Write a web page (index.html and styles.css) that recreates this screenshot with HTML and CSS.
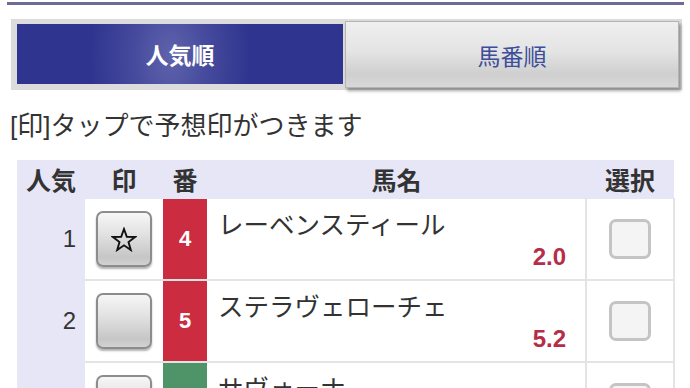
FILE: index.html
```html
<!DOCTYPE html>
<html lang="ja">
<head>
    <meta charset="UTF-8">
    <meta name="viewport" content="width=device-width, initial-scale=1.0">
    <title>人気順</title>
    <link rel="stylesheet" href="styles.css">
</head>
<body>
    <div class="top-line"></div>
    <div class="tabs">
        <div class="tab active">人気順</div>
        <div class="tab">馬番順</div>
    </div>
    <p class="hint">[印]タップで予想印がつきます</p>
    <table class="race-table">
        <thead>
            <tr>
                <th class="col-rank">人気</th>
                <th class="col-mark">印</th>
                <th class="col-num">番</th>
                <th class="col-name">馬名</th>
                <th class="col-check">選択</th>
            </tr>
        </thead>
        <tbody>
            <tr>
                <td class="rank">1</td>
                <td class="mark">
                    <button class="mark-btn">
                        <svg width="26" height="25" viewBox="0 0 26 25">
                            <polygon points="13,2 15.8,9.8 24,10 17.5,15 19.8,23 13,18.3 6.2,23 8.5,15 2,10 10.2,9.8" fill="none" stroke="#111" stroke-width="1.9" stroke-linejoin="miter"/>
                        </svg>
                    </button>
                </td>
                <td class="num red">4</td>
                <td class="name">
                    <div class="horse">レーベンスティール</div>
                    <div class="odds">2.0</div>
                </td>
                <td class="check"><span class="box"></span></td>
            </tr>
            <tr>
                <td class="rank">2</td>
                <td class="mark"><button class="mark-btn"></button></td>
                <td class="num red">5</td>
                <td class="name">
                    <div class="horse">ステラヴェローチェ</div>
                    <div class="odds">5.2</div>
                </td>
                <td class="check"><span class="box"></span></td>
            </tr>
            <tr>
                <td class="rank">3</td>
                <td class="mark"><button class="mark-btn"></button></td>
                <td class="num green">8</td>
                <td class="name">
                    <div class="horse">サヴォーナ</div>
                    <div class="odds">7.4</div>
                </td>
                <td class="check"><span class="box"></span></td>
            </tr>
        </tbody>
    </table>
</body>
</html>
```

FILE: styles.css
```css
body {
    margin: 0;
    background: #fff;
    color: #333;
    font-family: "Liberation Sans", "Noto Sans CJK JP", sans-serif;
    overflow: hidden;
}
.top-line {
    height: 3px;
    margin: 2px 6px 0 7px;
    background: #6f6b98;
}
.tabs {
    display: flex;
    margin: 14px 8px 0 11px;
    padding: 5px 3px 6px 6px;
    background: #dcdcdc;
    height: 60px;
}
.tab {
    display: flex;
    align-items: center;
    justify-content: center;
    font-size: 23px;
}
.tab.active {
    width: 326px;
    height: 60px;
    color: #fff;
    font-weight: bold;
    background: radial-gradient(ellipse 80px 130px at 47% 55%, #5f63ac 0%, #464b9e 45%, #2f358e 100%);
}
.tab:not(.active) {
    width: 332px;
    height: 65px;
    margin: -3px 0 0 2px;
    color: #3d4e9a;
    border: 1px solid #b4b4b4;
    background: linear-gradient(#efefef 0%, #e4e4e4 45%, #cfcfcf 80%, #d8d8d8 100%);
    box-shadow: 2px 3px 3px rgba(0, 0, 0, 0.35);
}
.hint {
    margin: 20px 0 0 10px;
    font-size: 26px;
    line-height: 32px;
    color: #333;
}
.race-table {
    margin: 18px 0 0 17px;
    width: 658px;
    border-collapse: collapse;
    table-layout: fixed;
}
.race-table th {
    height: 38px;
    padding: 0;
    background: #e6e6f6;
    font-size: 25px;
    font-weight: bold;
    color: #333;
}
.col-rank { width: 68px; }
.col-mark { width: 78px; }
.col-num { width: 44px; }
.col-check { width: 88px; }
.race-table td {
    height: 80px;
    padding: 0;
    border-top: 2px solid #e4e4e4;
}
.race-table tbody tr:first-child td {
    border-top: 1px solid #e6e6f6;
}
.rank {
    background: #e6e6f6;
    text-align: right;
    padding-right: 9px !important;
    font-size: 24px;
    border-top-color: #e6e6f6 !important;
}
.mark {
    text-align: center;
}
.mark-btn {
    display: inline-flex;
    align-items: center;
    justify-content: center;
    width: 56px;
    height: 56px;
    border: 2px solid #8c8c8c;
    border-radius: 7px;
    background: linear-gradient(#f6f6f6 0%, #e2e2e2 40%, #c6c6c6 85%, #d2d2d2 100%);
    box-shadow: 0 2px 2px rgba(0, 0, 0, 0.3);
    padding: 0;
    vertical-align: middle;
}
.num {
    text-align: center;
    color: #fff;
    font-weight: bold;
    font-size: 22px;
}
.num.red { background: #cc2c3f; }
.num.green { background: #4f9468; }
.name {
    padding: 0 19px 0 11px !important;
    vertical-align: top;
}
.horse {
    margin-top: 10px;
    font-size: 25.5px;
    line-height: 32px;
    color: #333;
}
.odds {
    text-align: right;
    font-size: 24px;
    font-weight: bold;
    color: #b52d48;
    margin-top: 2px;
}
.check {
    text-align: center;
    border-left: 2px solid #e4e4e4;
    border-right: 2px solid #e4e4e4;
}
.box {
    display: inline-block;
    width: 36px;
    height: 34px;
    border: 3px solid #c4c4c4;
    border-radius: 7px;
    background: #f4f4f4;
    vertical-align: middle;
}
```
